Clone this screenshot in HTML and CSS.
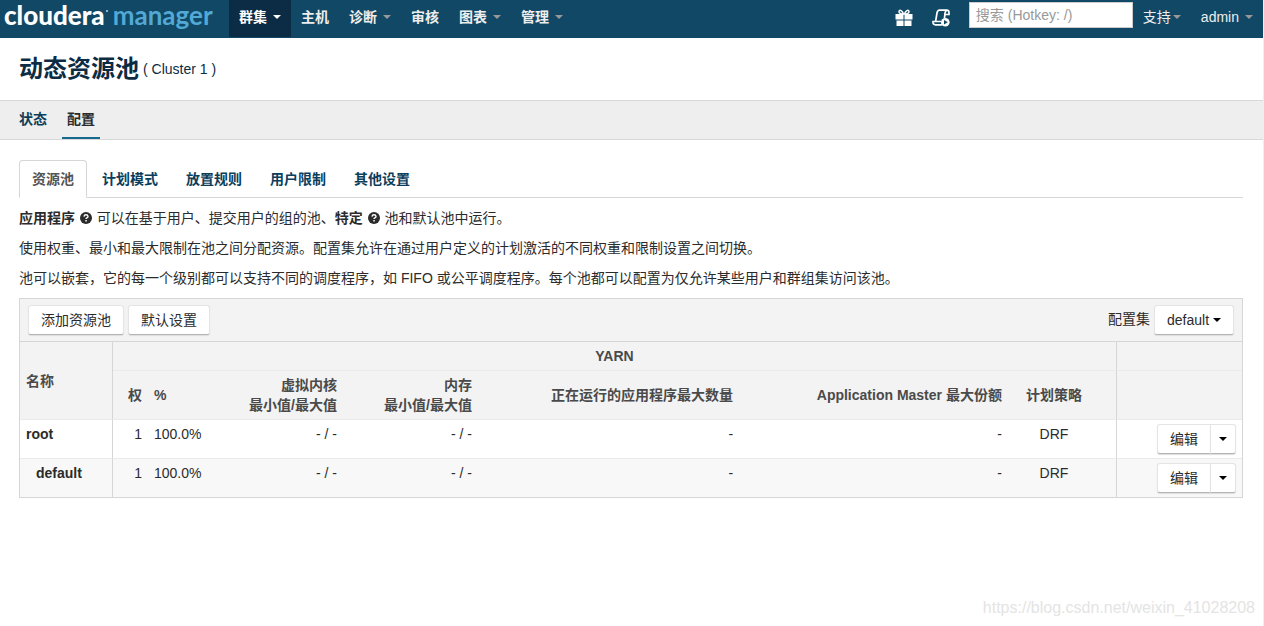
FILE: index.html
```html
<!DOCTYPE html>
<html lang="zh-CN">
<head>
<meta charset="utf-8">
<title>动态资源池 - Cloudera Manager</title>
<link rel="stylesheet" href="styles.css">
</head>
<body>
<header class="topbar">
  <a class="brand" href="#"><span class="brand-main">cloudera</span><span class="brand-dot"></span><span class="brand-sub">manager</span></a>
  <nav class="mainnav">
    <button class="navitem active" type="button">群集<span class="caret"></span></button>
    <a class="navitem" href="#">主机</a>
    <button class="navitem" type="button">诊断<span class="caret"></span></button>
    <a class="navitem" href="#">审核</a>
    <button class="navitem" type="button">图表<span class="caret"></span></button>
    <button class="navitem" type="button">管理<span class="caret"></span></button>
  </nav>
  <div class="tools">
    <a class="tool" href="#" aria-label="包裹">
      <svg width="18" height="18" viewBox="0 0 18 18"><path d="M.5 5h8v5.500h-8zM9.500 5h8v5.500h-8zM1.500 11.500h7V17h-7zM9.500 11.500h7V17h-7z" fill="#fff"/><path d="M8.500 5C7.500 1.500 4.500.2 4 2.300 3.700 4.200 6 5 8.500 5zM9.500 5C10.500 1.500 13.500.2 14 2.300 14.300 4.200 12 5 9.500 5z" fill="none" stroke="#fff" stroke-width="1.500"/></svg>
    </a>
    <a class="tool" href="#" aria-label="运行命令">
      <svg width="18" height="18" viewBox="0 0 18 18"><g fill="none" stroke="#fff" stroke-width="1.700"><path d="M3.600 12.500L5 4Q5.500 1.200 7.500 1.200H15q-1.800.8-2 3L12.500 9"/><path d="M14.500 1.200q2.500 0 2.500 2.300V5.500h-4"/><path d="M9 12.500H1q-.2 3.300 2.500 3.300H10"/></g><circle cx="13.300" cy="13.200" r="4.300" fill="#fff"/><path d="M12 10.900l3.800 2.300-3.800 2.300z" fill="#114865"/></svg>
    </a>
    <input class="search" type="text" placeholder="搜索 (Hotkey: /)" aria-label="搜索">
    <button class="usermenu tight" type="button">支持<span class="caret"></span></button>
    <button class="usermenu" type="button">admin<span class="caret"></span></button>
  </div>
</header>
<div class="heading">
  <h1>动态资源池</h1><span class="cluster">( Cluster 1 )</span>
</div>
<nav class="subnav">
  <a href="#">状态</a>
  <a class="current" href="#">配置</a>
</nav>
<main class="content">
  <nav class="tabs">
    <a class="selected" href="#">资源池</a>
    <a href="#">计划模式</a>
    <a href="#">放置规则</a>
    <a href="#">用户限制</a>
    <a href="#">其他设置</a>
  </nav>
  <p><b>应用程序</b> <svg class="help" viewBox="0 0 12 12"><circle cx="6" cy="6" r="6" fill="#2b2b2b"/><path d="M4 4.600q.2-1.800 2-1.800t2 1.600q0 .9-1.200 1.500-.8.400-.8 1.100" fill="none" stroke="#fff" stroke-width="1.400"/><path d="M5.300 8h1.500v1.400H5.300z" fill="#fff"/></svg> 可以在基于用户、提交用户的组的池、<b>特定</b> <svg class="help" viewBox="0 0 12 12"><circle cx="6" cy="6" r="6" fill="#2b2b2b"/><path d="M4 4.600q.2-1.800 2-1.800t2 1.600q0 .9-1.200 1.500-.8.400-.8 1.100" fill="none" stroke="#fff" stroke-width="1.400"/><path d="M5.300 8h1.500v1.400H5.300z" fill="#fff"/></svg> 池和默认池中运行。</p>
  <p>使用权重、最小和最大限制在池之间分配资源。配置集允许在通过用户定义的计划激活的不同权重和限制设置之间切换。</p>
  <p>池可以嵌套，它的每一个级别都可以支持不同的调度程序，如 FIFO 或公平调度程序。每个池都可以配置为仅允许某些用户和群组集访问该池。</p>
  <section class="panel">
    <div class="toolbar">
      <button class="btn" type="button">添加资源池</button>
      <button class="btn" type="button">默认设置</button>
      <label class="setlabel" for="configset">配置集</label>
      <span class="selectbox"><select id="configset" class="btn"><option>default</option></select></span>
    </div>
    <table class="pools">
      <colgroup><col class="c-name"><col class="c-weight"><col class="c-percent"><col class="c-cores"><col class="c-memory"><col><col class="c-share"><col class="c-policy"><col class="c-actions"></colgroup>
      <thead>
        <tr class="group"><th class="left rule" rowspan="2">名称</th><th class="rule" colspan="7">YARN</th><th></th></tr>
        <tr><th class="right">权</th><th class="left">%</th><th class="right">虚拟内核<br>最小值/最大值</th><th class="right">内存<br>最小值/最大值</th><th class="right">正在运行的应用程序最大数量</th><th class="right">Application Master 最大份额</th><th class="policy rule">计划策略</th><th></th></tr>
      </thead>
      <tbody>
        <tr><td class="rule"><b>root</b></td><td class="right">1</td><td>100.0%</td><td class="right">- / -</td><td class="right">- / -</td><td class="right">-</td><td class="right">-</td><td class="policy rule">DRF</td><td class="actions"><div class="split"><button class="btn" type="button">编辑</button><button class="btn more" type="button" aria-label="更多操作"><span class="caret"></span></button></div></td></tr>
        <tr><td class="rule child"><b>default</b></td><td class="right">1</td><td>100.0%</td><td class="right">- / -</td><td class="right">- / -</td><td class="right">-</td><td class="right">-</td><td class="policy rule">DRF</td><td class="actions"><div class="split"><button class="btn" type="button">编辑</button><button class="btn more" type="button" aria-label="更多操作"><span class="caret"></span></button></div></td></tr>
      </tbody>
    </table>
  </section>
</main>
<footer class="watermark">https://blog.csdn.net/weixin_41028208</footer>
</body>
</html>
```
FILE: styles.css
```css
* { box-sizing: border-box; }
html { background: #fff; }
body {
  margin: 0;
  min-height: 100vh;
  display: flex;
  flex-direction: column;
  border-right: 1px solid #eee;
  font: 14px/20px "Liberation Sans", "Noto Sans CJK SC", sans-serif;
  color: #2b2b2b;
}
a { color: #0b3e5c; text-decoration: none; }
button, input, select { font: inherit; color: inherit; }
button { cursor: pointer; }
.caret {
  display: inline-block;
  border: 4px solid transparent;
  border-top-color: currentColor;
  border-bottom: 0;
  vertical-align: middle;
}
.topbar { display: flex; height: 38px; background: #114865; }
.brand {
  display: flex;
  width: 229px;
  padding-left: 4px;
  font-family: Lato, sans-serif;
  font-size: 26px;
  line-height: 31px;
  color: #fff;
}
.brand-main { font-weight: 900; }
.brand-dot { width: 2px; height: 2px; margin: 10px 5px 0 1px; background: #8fb2c6; }
.brand-sub { color: #52a9d6; font-weight: 700; }
.mainnav { display: flex; flex: 1; }
.navitem {
  display: flex;
  align-items: center;
  gap: 6px;
  height: 37px;
  padding: 0 10px 4px;
  border: 0;
  background: none;
  color: #eee;
  font-weight: 700;
}
.navitem .caret, .usermenu .caret { border-top-color: #999; }
.navitem.active { background: #0b2c44; color: #fff; }
.navitem.active .caret { border-top-color: #fff; }
.tools { display: flex; align-items: flex-start; }
.tool { margin: 9px 19px 0 0; height: 18px; }
.tool svg { display: block; }
.search {
  width: 164px;
  height: 26px;
  margin-top: 2px;
  padding: 0 6px;
  border: 1px solid #ccc;
  background: #fff;
}
.search::placeholder { color: #999; opacity: 1; }
.usermenu {
  display: flex;
  align-items: center;
  gap: 6px;
  height: 34px;
  padding: 0 10px;
  border: 0;
  background: none;
  color: #eee;
}
.usermenu.tight { gap: 2px; }
.heading { display: flex; align-items: center; gap: 4px; height: 62px; padding: 0 19px; color: #0b2c44; }
h1 { margin: 0; font-size: 24px; line-height: 30px; }
.subnav { display: flex; height: 40px; padding: 0 14px; gap: 10px; background: #eee; border: solid #d9d9d9; border-width: 1px 0; }
.subnav a { padding: 8px 5px; font-weight: 700; }
.subnav .current { border-bottom: 2px solid #16698f; color: #2b2b2b; }
.content { flex: 1; padding: 20px 20px 0 19px; }
.tabs { display: flex; gap: 2px; margin-bottom: 10px; border-bottom: 1px solid #d6d6d6; }
.tabs a { margin-bottom: -1px; padding: 8px 12px; border: 1px solid transparent; font-weight: 700; }
.tabs .selected { border-color: #d6d6d6 #d6d6d6 #fff; border-radius: 4px 4px 0 0; background: #fff; color: #555; }
p { margin: 0 0 10px; }
.help { width: 12px; height: 12px; margin: 0 1px; vertical-align: -1px; }
.panel { border: 1px solid #d6d6d6; }
.toolbar { display: flex; gap: 4px; align-items: flex-start; padding: 6px 8px; background: #f3f3f3; border-bottom: 1px solid #d6d6d6; }
.btn {
  height: 30px;
  padding: 0 12px;
  border: 1px solid #e4e4e4;
  border-bottom-color: #b4b4b4;
  border-radius: 3px;
  background: #fff;
  box-shadow: 0 1px 1px #ddd;
}
.setlabel { margin-left: auto; line-height: 28px; }
.selectbox { position: relative; display: flex; }
.selectbox select { appearance: none; width: 80px; }
.selectbox::after {
  content: "";
  position: absolute;
  right: 13px;
  top: 13px;
  border: 4px solid transparent;
  border-top-color: #000;
  border-bottom: 0;
  pointer-events: none;
}
.pools { width: 100%; table-layout: fixed; border-collapse: separate; border-spacing: 0; }
.c-name { width: 93px; }
.c-weight { width: 35px; }
.c-percent { width: 80px; }
.c-cores { width: 115px; }
.c-memory { width: 135px; }
.c-share { width: 22%; }
.c-policy { width: 109px; }
.c-actions { width: 125px; }
th { padding: 4px 6px; background: #f3f3f3; border-bottom: 1px solid #eaeaea; color: #4a4a4a; font-weight: 700; }
td { height: 39px; padding: 4px 6px; border-bottom: 1px solid #eaeaea; vertical-align: top; }
tbody tr:last-child td { height: 38px; border-bottom: 0; background: #f8f8f8; }
.rule { border-right: 1px solid #d6d6d6; }
.left { text-align: left; }
.right { text-align: right; }
.policy { padding-right: 22px; text-align: center; }
.child { padding-left: 16px; }
.pools .actions { padding-bottom: 0; }
.split { display: flex; justify-content: flex-end; }
.split .btn { border-radius: 3px 0 0 3px; }
.split .more { margin-left: -1px; padding: 0 8px; border-radius: 0 3px 3px 0; color: #000; }
.more .caret { display: block; }
.watermark { padding: 0 8px 8px; text-align: right; font-size: 16px; color: #e4e4e4; }
```
